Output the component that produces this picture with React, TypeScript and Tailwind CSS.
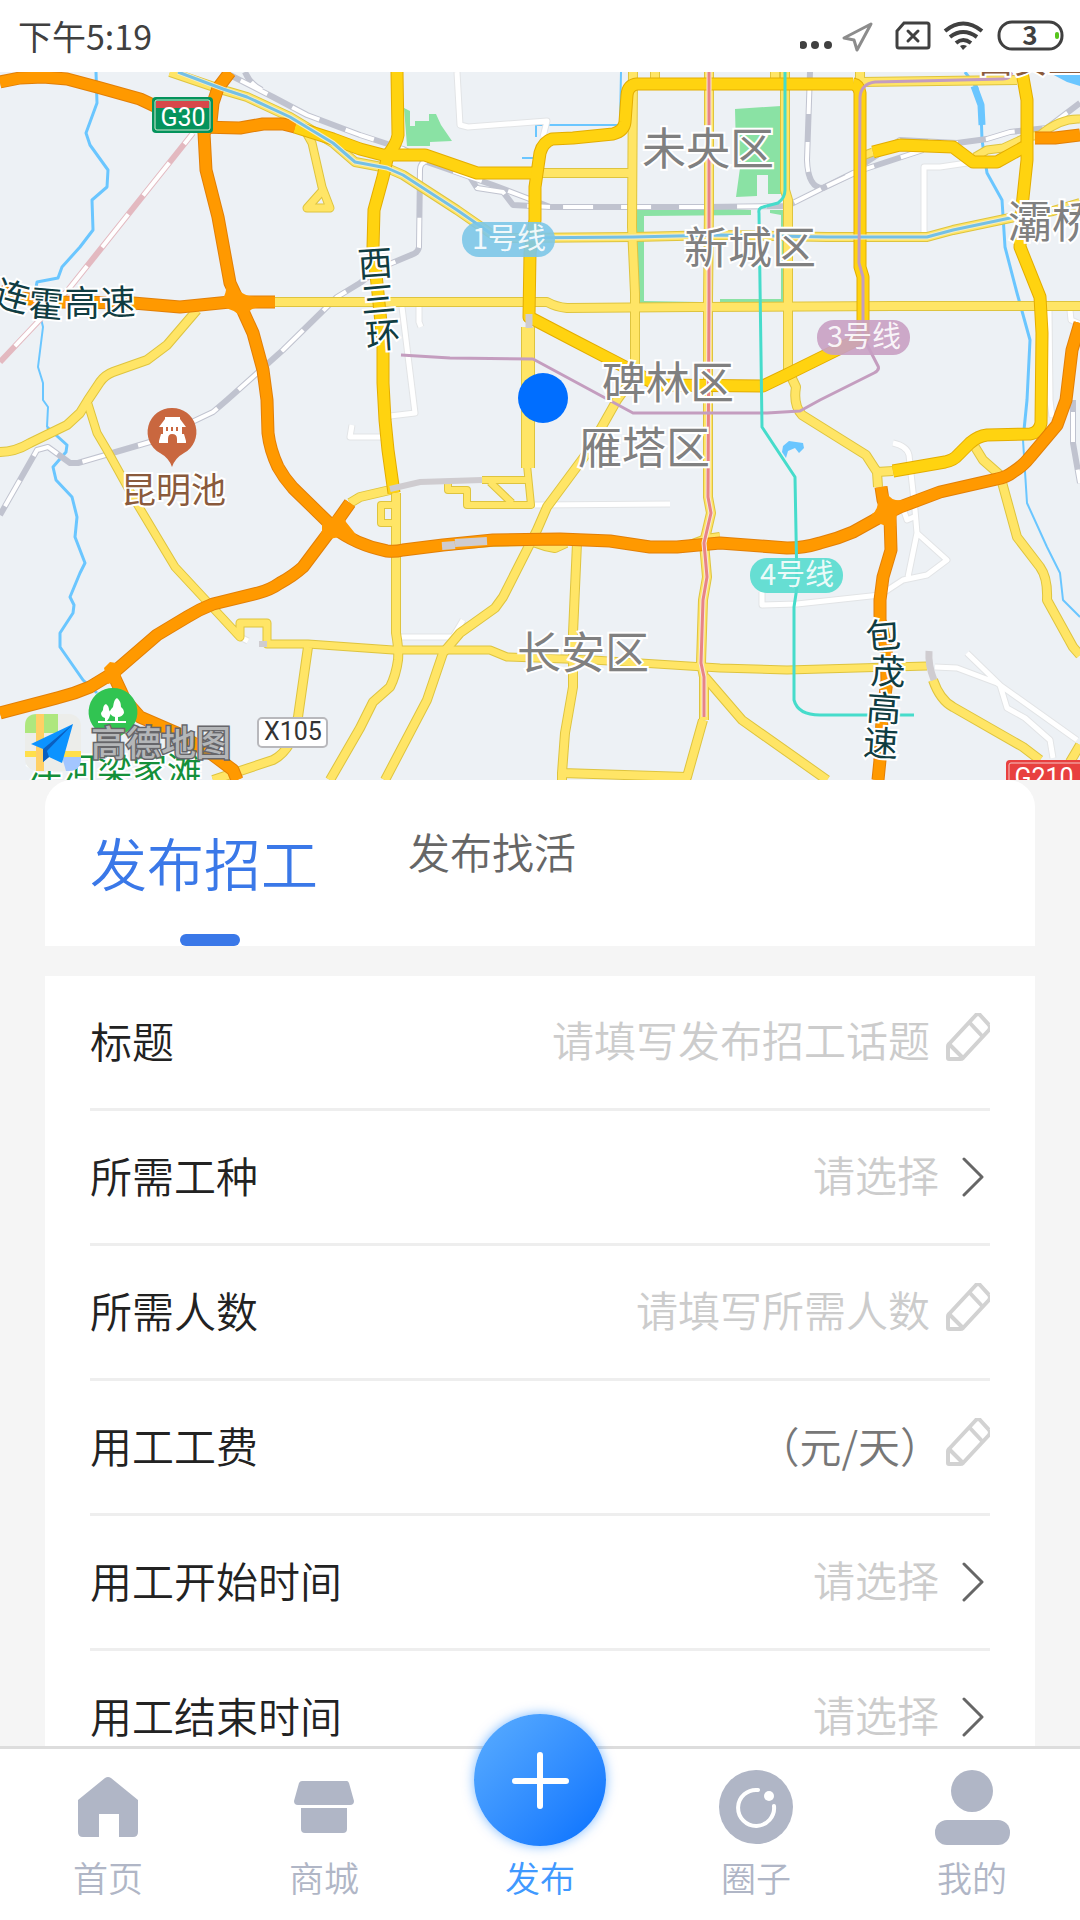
import type { ReactNode } from "react";

interface Road {
	d: string;
	w?: number;
}

const HIGHWAYS: Road[] = [
	{ d: "M0 82L20 78L43 77L67 79L97 87L140 99L157 107L200 127L240 128L263 124L283 124L295 127" },
	{ d: "M230 72L218 88L213 103L211 122L204 133L206 170L218 217L230 283L238 300L253 333L263 370L267 400L268 433Q270 450 278 467Q284 478 293 488L333 527Q356 545 387 551Q395 552 403 550L443 545L493 540L560 539L610 541L650 547L677 547L720 543L787 548Q804 548 820 543Q837 539 853 532L880 517L900 507L940 492L997 479Q1007 477 1013 472Q1023 466 1030 457L1057 425L1066 400L1072 350L1080 323" },
	{ d: "M0 291L20 298L60 302L133 303L180 307L230 302L275 302" },
	{ d: "M350 503L333 527L303 567Q293 576 280 583Q270 590 258 593L213 604Q200 609 187 617L157 635L113 673L90 687Q74 694 57 698L0 713" },
	{ d: "M112 672L125 700L140 717L177 733L213 755L233 770L237 780" },
	{ d: "M881 487L883 500L890 517L891 550L883 577L880 600L880 620L886 647L887 680L882 720L880 760L878 780" },
	{ d: "M1035 138L1055 138L1080 135" },
];

const ARTERIALS: Road[] = [
	{ d: "M397 72L398 135Q397 143 388 155L383 177L374 210L373 247L378 293L383 343L383 383L385 420L388 450L394 493" },
	{ d: "M295 127L333 139L360 149L383 155L425 155L477 173L537 173" },
	{ d: "M853 84L637 84Q628 85 627 95L625 122Q624 131 613 134L573 138L552 139Q543 142 540 153L535 187L535 220L530 253L529 317L573 340L627 368L657 385L763 386L790 373L863 337L863 277L860 267L860 93Q859 85 853 84" },
	{ d: "M873 152L900 145L953 147L973 162L997 162L1024 147" },
	{ d: "M1022 72L1027 100L1027 160L1022 207L1020 247L1040 297L1042 333L1041 423Q1039 433 1030 434L987 435Q978 436 970 443L958 455Q954 460 945 462L893 471" },
];

const STREETS: Road[] = [
	{ d: "M170 72L223 90L247 97L290 117L333 143L355 162L387 168L403 175L457 210L493 235L513 238L633 237L720 235L827 237L927 237L953 230L1010 218L1053 211L1080 203" },
	{ d: "M303 127L312 143L322 187L330 208L307 208L323 190", w: 7 },
	{ d: "M275 302L527 302L547 302Q556 307 567 308L693 307L893 306L1037 306L1080 306" },
	{ d: "M197 310L167 345L147 360L113 372Q105 375 100 382L88 400L80 413L67 425L30 443Q15 452 0 452" },
	{ d: "M88 404L97 433L107 450L133 497L175 567L240 637L240 623L267 623L267 644L308 644L393 650L490 650L507 657L593 660L720 668L787 670L927 666", w: 7 },
	{ d: "M308 647L298 717L290 743Q283 755 273 760L213 780" },
	{ d: "M396 493L396 550L396 633Q399 650 398 660Q396 675 390 687L373 702L360 728L330 780" },
	{ d: "M635 375L617 400L587 453L547 507L537 530L503 597L495 608L460 633L443 653L427 700L385 780" },
	{ d: "M577 543L573 633L573 687L565 733L562 773L687 777L703 720M562 773L562 780" },
	{ d: "M709 72L709 207L708 300L708 393L708 497L711 513L704 543L707 577L703 600L701 663L704 677L704 720" },
	{ d: "M633 72L632 227L635 293L635 367" },
	{ d: "M655 72L655 84" },
	{ d: "M775 72L775 84" },
	{ d: "M537 173L632 173" },
	{ d: "M785 72L785 190L788 200L788 370L796 387Q793 405 802 415L866 455L877 472L878 487M877 472L893 471" },
	{ d: "M860 72L860 82L1017 80" },
	{ d: "M865 155L873 152M975 157L987 150L1003 148L1027 137L1040 135Q1060 118 1080 119", w: 7 },
	{ d: "M528 327L528 468", w: 12 },
	{ d: "M527 465L531 505L467 505L467 490L448 490L448 483M482 480L527 480M490 482L512 503", w: 6 },
	{ d: "M350 503L360 497L390 490" },
	{ d: "M395 505L381 505L381 523L397 523", w: 6 },
	{ d: "M975 447L983 460L1000 475L1017 537L1040 567Q1048 578 1047 600L1073 647L1080 655" },
	{ d: "M933 680Q940 700 953 707L1023 747L1040 760M1070 762L1080 745" },
	{ d: "M705 677L742 720L827 780" },
	{ d: "M396 550L430 547L490 542L530 541L545 546L555 548L566 543M690 545L706 539L720 537" },
];

const LANES: Road[] = [
	{ d: "M457 72L460 125L468 127L547 121L543 137" },
	{ d: "M402 307L415 413L390 416M419 307L419 322L421 327" },
	{ d: "M352 425L350 437L382 437" },
	{ d: "M535 505L670 504M400 637L453 637L463 620" },
	{ d: "M924 233L924 167L940 167L967 163" },
	{ d: "M1049 310L1050 400L1052 417M1070 310L1071 320L1080 324" },
	{ d: "M893 443Q907 446 909 455L915 510L917 533L908 577M917 533L947 560L927 575L903 580L880 595L797 604L762 605L762 592" },
	{ d: "M935 667L957 668L997 683L1077 740M967 653L1000 685L1007 708L1025 718L1050 740L1053 758" },
	{ d: "M904 511L907 520L916 516" },
	{ d: "M240 637L248 641" },
];

const RAILS = [
	"M230 75L273 97L307 115L360 135L403 149L427 162L470 177L493 185L527 198L550 207L707 207L787 206L853 173L923 150",
	"M245 72Q250 84 262 90",
	"M470 177L477 188L503 192L513 205L550 207",
	"M865 163L900 140L957 143L987 139L1010 132L1047 128L1080 103",
	"M810 72L807 160Q808 188 823 188L857 172",
	"M437 163Q420 158 420 170L419 247Q418 253 411 255L380 268L360 283L337 297L283 350L227 400L213 412L150 442L78 463L70 463L48 447L37 450L0 515",
	"M1073 400L1073 443L1080 483",
];

const RIVERS: Road[] = [
	{ d: "M96 72L97 103L86 133L90 145L108 170L107 187L92 200L93 230L80 247L62 267L58 278L37 282L35 293" },
	{ d: "M35 293L43 327L38 367L43 383L43 400L48 407L47 427", w: 2 },
	{ d: "M47 427L67 445L66 452L53 467L56 480L72 497L77 517L75 537L85 563L80 573L70 597L74 605L73 613L60 633L60 647L83 680L97 693" },
	{ d: "M965 72L977 88L981 110L982 140L987 173L1002 200L1005 247L1017 293L1030 340L1027 400L1023 440" },
	{ d: "M1023 440L1027 503L1047 547L1060 573L1063 600L1080 617", w: 2 },
	{ d: "M621 72L620 125L537 125M536 125L536 137M522 158L533 158", w: 2 },
];

interface District {
	name: string;
	x: number;
	y: number;
}

const DISTRICTS: District[] = [
	{ name: "未央区", x: 708, y: 149 },
	{ name: "新城区", x: 750, y: 248 },
	{ name: "灞桥区", x: 1074, y: 222 },
	{ name: "碑林区", x: 668, y: 383 },
	{ name: "雁塔区", x: 644, y: 448 },
	{ name: "长安区", x: 583, y: 653 },
];

// [char, x, y, rotation]
const ROAD_NAMES: [string, number, number, number][] = [
	["连", 12, 296, 15],
	["霍", 46, 304, 5],
	["高", 82, 303, 0],
	["速", 118, 302, -2],
	["西", 375, 263, -4],
	["三", 378, 299, -5],
	["环", 383, 335, -4],
	["包", 883, 635, -5],
	["茂", 888, 671, 2],
	["高", 884, 708, 4],
	["速", 881, 743, 4],
];

const METRO_LINES = [
	{ name: "1号线", x: 462, y: 222, fill: "#7cc6e8" },
	{ name: "3号线", x: 817, y: 320, fill: "#c8a0c3" },
	{ name: "4号线", x: 750, y: 558, fill: "#57dccf" },
];

function RoadLayer({ roads, color, casing, width }: { roads: Road[]; color: string; casing: string; width: number }) {
	return (
		<g fill="none" strokeLinejoin="round">
			{roads.map((road) => (
				<path key={road.d} d={road.d} stroke={casing} strokeWidth={(road.w ?? width) + 2} />
			))}
			{roads.map((road) => (
				<path key={road.d} d={road.d} stroke={color} strokeWidth={road.w ?? width} />
			))}
		</g>
	);
}

function CityMap() {
	return (
		<svg
			viewBox="0 72 1080 708"
			className="block w-full shrink-0 bg-[#edf1f5] font-['Noto_Sans_CJK_SC',sans-serif]"
			role="img"
			aria-label="高德地图"
		>
			<g fill="#8ae2a4">
				<path d="M404 108L410 111V126H415V121H429V114H436L441 125L452 141L430 142V146H407Z" />
				<path d="M735 109L781 106V194H768V175H757V196L736 197L740 168L736 150Z" />
				<path d="M636 210L708 208L751 210V215L644 216V301L700 302V307H636ZM770 210H784V304L720 305V299H781V215L770 213Z" />
			</g>
			<path d="M783 446L789 441L803 443L804 448L799 453L795 448L788 451L786 458L782 452Z" fill="#6ac6ff" />
			<path d="M1048 72L1067 82L1080 86V72Z" fill="#6ac6ff" />
			<g fill="none" stroke="#6ac6ff" strokeLinejoin="round">
				{RIVERS.map((river) => (
					<path key={river.d} d={river.d} strokeWidth={river.w ?? 3} />
				))}
				<path d="M974 86L981 105L982 125" strokeWidth="7" />
			</g>

			<RoadLayer roads={LANES} color="#ffffff" casing="#e2e4e6" width={5} />

			<g fill="none" strokeLinejoin="round">
				<path d="M193 133L68 290L0 362" stroke="#e3b9c0" strokeWidth="6" />
				<path d="M193 133L68 290L0 362" stroke="#ffffff" strokeWidth="4" strokeDasharray="42 24" strokeDashoffset="28" />
				{RAILS.map((d) => (
					<path key={d} d={d} stroke="#c0c3cf" strokeWidth="6" />
				))}
				{RAILS.map((d) => (
					<path key={d} d={d} stroke="#ffffff" strokeWidth="4" strokeDasharray="30 28" strokeDashoffset="-12" />
				))}
			</g>

			<RoadLayer roads={STREETS} color="#ffe566" casing="#dec43f" width={8} />
			<RoadLayer roads={ARTERIALS} color="#ffd310" casing="#e3ad00" width={11} />
			<RoadLayer roads={HIGHWAYS} color="#ff9900" casing="#e27f06" width={11} />
			<g fill="#ff9900">
				<path d="M226 283Q228 300 212 305L226 308Q241 312 248 327L249 312Q252 306 275 306V297H255Q240 296 234 283Z" />
				<path d="M322 516L332 518L341 508L346 522L358 537L340 537L329 539L317 541L322 531Z" />
				<path d="M878 495L887 493Q891 502 905 500L904 510Q894 512 896 526H886L878 523L868 528L872 514Q879 510 878 495Z" />
				<path d="M104 668L110 662L122 664L120 680L108 684Z" />
			</g>
			<g fill="none" stroke="#cfccd0">
				<path d="M390 489L420 482L482 480" strokeWidth="6" />
				<path d="M442 546L455 545M455 543L487 541" strokeWidth="8" />
				<path d="M529 314V328" strokeWidth="7" />
				<path d="M929 651Q928 665 934 680" strokeWidth="7" />
				<path d="M259 644H267" strokeWidth="6" />
			</g>

			<g fill="none" strokeLinejoin="round">
				<path d="M178 72L223 89L247 97L290 117L333 143L355 162L387 168L403 175L457 210L493 235L513 238L633 237L720 235L827 237L927 237L953 230L1010 218L1080 206" stroke="#f2ecc8" strokeWidth="5" />
				<path d="M178 72L223 89L247 97L290 117L333 143L355 162L387 168L403 175L457 210L493 235L513 238L633 237L720 235L827 237L927 237L953 230L1010 218L1080 206" stroke="#74c0e6" strokeWidth="3" />
				<path d="M709 72L709 300L708 497L711 513L704 543L707 577L703 600L701 663L704 677L704 717" stroke="#f6e6dc" strokeWidth="5" />
				<path d="M709 72L709 300L708 497L711 513L704 543L707 577L703 600L701 663L704 677L704 717" stroke="#e88486" strokeWidth="3" />
				<path d="M401 355L450 358L533 359L633 413L767 413L800 411L820 400L874 373Q880 370 878 366L863 337L863 277L859 263L860 97Q861 84 875 82L1003 79Q1010 79 1012 72" stroke="#c49dbf" strokeWidth="3" />
				<path d="M785 72L785 190Q785 198 778 203L763 207Q758 208 759 213L762 427L795 477L797 587L794 607L794 700Q798 715 820 715L914 715" stroke="#46dccb" strokeWidth="3" />
			</g>

			{METRO_LINES.map(({ name, x, y, fill }) => (
				<g key={name}>
					<rect x={x} y={y} width="93" height="35" rx="17" fill={fill} fillOpacity="0.9" />
					<text x={x + 47} y={y + 27} textAnchor="middle" fontSize="29" fill="#ffffff" fillOpacity="0.9">
						{name}
					</text>
				</g>
			))}

			<g fontSize="44" fill="#808080" textAnchor="middle" stroke="#ffffff" strokeWidth="4" paintOrder="stroke">
				{DISTRICTS.map(({ name, x, y }) => (
					<text key={name} x={x} y={y + 16}>
						{name}
					</text>
				))}
			</g>
			<g fontSize="35" fill="#103d42" textAnchor="middle" stroke="#ffffff" strokeWidth="4" paintOrder="stroke">
				{ROAD_NAMES.map(([char, x, y, angle]) => (
					<text key={`${char}${x}`} x={x} y={y + 13} transform={`rotate(${angle} ${x} ${y})`}>
						{char}
					</text>
				))}
			</g>
			<g fontSize="35" stroke="#ffffff" strokeWidth="4" paintOrder="stroke">
				<text x="121" y="503" fill="#8a5a3c">
					昆明池
				</text>
				<text x="978" y="73" fill="#8a5a3c">
					西安工
				</text>
				<text x="27" y="783" fill="#14903a">
					沣河梁家滩
				</text>
			</g>

			<rect x="152" y="97" width="61" height="36" rx="4" fill="#04935c" />
			<rect x="155" y="100" width="55" height="30" rx="2" fill="none" stroke="#d6e8d2" />
			<path d="M156 101H209V108H156Z" fill="#d8474a" />
			<rect x="1006" y="760" width="90" height="36" rx="4" fill="#e8403f" />
			<rect x="1009" y="763" width="84" height="30" rx="2" fill="none" stroke="#f6c4c4" />
			<rect x="258" y="718" width="69" height="29" rx="4" fill="#ffffff" stroke="#b8b8bc" strokeWidth="2" />
			<g fontSize="25" textAnchor="middle" className="font-['Roboto',sans-serif]">
				<text x="183" y="126" fill="#ffffff">
					G30
				</text>
				<text x="1044" y="786" fill="#ffffff">
					G210
				</text>
				<text x="293" y="740" fill="#333333">
					X105
				</text>
			</g>

			{/* landmark pins */}
			<path d="M172 408A24 24 0 0 1 184 453Q175 458 172 467Q169 458 160 453A24 24 0 0 1 172 408Z" fill="#c9673f" />
			<path d="M165 419V417H180V419L186 427H182V434H184L186 441V443H177V439Q177 434 172 434Q168 434 168 439V443H159V441L161 434H163V427H159L165 419ZM166 427V431H168V427ZM171 427V431H173V427ZM176 427V431H178V427Z" fill="#ffffff" fillRule="evenodd" />
			<path d="M113 688A24 24 0 0 1 125 733Q116 738 113 747Q110 738 101 733A24 24 0 0 1 113 688Z" fill="#31c452" />
			<path d="M98 721H126V723H98ZM115 721V717Q110 716 110 711Q111 709 113 707Q114 699 117 698Q121 701 121 707Q124 709 124 713Q122 717 118 717V721ZM105 721V718Q101 717 101 713L103 710Q103 705 106 704Q109 706 109 710L111 713L109 718L107 721Z" fill="#ffffff" />

			{/* provider mark */}
			<g>
				<rect x="25" y="714" width="56" height="57" rx="12" fill="#ecedea" />
				<path d="M37 714H58V733H25V726Q25 714 37 714Z" fill="#aee77e" />
				<path d="M25 751H81V757H25Z" fill="#ffdf4b" />
				<path d="M62 757H81V760Q80 771 69 771H66Z" fill="#a3c6ff" />
				<path d="M36 714H44V771H36Z" fill="#ffd065" />
				<path d="M73 724L31 744L43 749L43 762L49 757L62 763Z" fill="#0c93ff" />
				<path d="M73 724L43 749L43 762L49 757L47 751Z" fill="#0a5fc0" />
			</g>
			<text x="91" y="756" fontSize="35" fontWeight="500" fill="#b4b6b8" stroke="#66666a" strokeWidth="3" paintOrder="stroke">
				高德地图
			</text>

			<circle cx="543" cy="398" r="25" fill="#006eff" />
		</svg>
	);
}

function StatusBar() {
	return (
		<header className="flex h-[72px] shrink-0 items-center justify-between bg-white pr-4 pl-[18px] text-[#404040]">
			<time className="text-[34px] leading-none">下午5:19</time>
			<svg width="264" height="32" viewBox="800 20 264 32" fill="none" aria-hidden="true">
				<g fill="#404040">
					<circle cx="803" cy="45" r="4" />
					<circle cx="815" cy="45" r="4" />
					<circle cx="828" cy="45" r="4" />
				</g>
				<path d="M871 24L844 38L854 40L857 50Z" stroke="#8c8c8c" strokeWidth="3" strokeLinejoin="round" />
				<path d="M904 23H927Q929 23 929 25V46Q929 48 927 48H899Q897 48 897 46V31Z" stroke="#404040" strokeWidth="3" />
				<path d="M908 31L918 41M918 31L908 41" stroke="#404040" strokeWidth="3" strokeLinecap="round" />
				<g stroke="#404040" strokeWidth="4">
					<path d="M945 31Q963 16 982 31" />
					<path d="M950 37Q963 27 977 37" />
					<path d="M956 43Q963 37 971 43" />
				</g>
				<path d="M960 46Q963 44 967 46L963 50Z" fill="#404040" />
				<rect x="999" y="22" width="63" height="27" rx="13" stroke="#404040" strokeWidth="3" />
				<rect x="1055" y="32" width="4" height="7" rx="2" fill="#56c41b" />
				<text x="1030" y="45" fontSize="26" fontWeight="700" textAnchor="middle" fill="#404040">
					3
				</text>
			</svg>
		</header>
	);
}

function PencilIcon() {
	return (
		<svg viewBox="0 0 44 48" className="mb-2.5 h-12 w-11 shrink-0" fill="none" stroke="#d2d2d2" strokeWidth="4" strokeLinejoin="round" aria-hidden="true">
			<path d="M3 31L30 2Q32 0 34 2L43 12Q45 14 43 17L17 45Q16 46 14 46H3Q2 46 2 45V33Q2 32 3 31Z" />
			<path d="M3 31L17 45M23 9L37 24" />
		</svg>
	);
}

function ChevronIcon() {
	return (
		<svg viewBox="0 0 22 40" className="mr-1.5 h-10 w-[22px] shrink-0" fill="none" stroke="#666666" strokeWidth="3" strokeLinecap="round" strokeLinejoin="round" aria-hidden="true">
			<path d="M2 2L20 20L2 38" />
		</svg>
	);
}

interface Field {
	id: string;
	label: string;
	hint: string;
	type: "input" | "unit" | "select";
}

const FIELDS: Field[] = [
	{ id: "title", label: "标题", hint: "请填写发布招工话题", type: "input" },
	{ id: "trade", label: "所需工种", hint: "请选择", type: "select" },
	{ id: "headcount", label: "所需人数", hint: "请填写所需人数", type: "input" },
	{ id: "wage", label: "用工工费", hint: "（元/天）", type: "unit" },
	{ id: "start", label: "用工开始时间", hint: "请选择", type: "select" },
	{ id: "end", label: "用工结束时间", hint: "请选择", type: "select" },
];

function FieldControl({ field }: { field: Field }) {
	if (field.type === "select") {
		return (
			<div className="flex items-center gap-[22px]">
				<select id={field.id} className="appearance-none bg-transparent pb-1.5 text-[#cccccc] outline-none">
					<option>{field.hint}</option>
				</select>
				<ChevronIcon />
			</div>
		);
	}
	return (
		<div className={field.type === "unit" ? "flex min-w-0 flex-1 items-center gap-1" : "flex min-w-0 flex-1 items-center gap-4"}>
			<input
				id={field.id}
				type="text"
				placeholder={field.hint}
				className={
					field.type === "unit"
						? "min-w-0 flex-1 pb-1 text-right outline-none placeholder:text-[#777777]"
						: "min-w-0 flex-1 pb-1.5 text-right outline-none placeholder:text-[#cccccc]"
				}
			/>
			<PencilIcon />
		</div>
	);
}

function PublishForm() {
	return (
		<form className="mx-[45px] mt-[30px] bg-white px-[45px] text-[42px] leading-[60px] font-[350] text-[#222222]">
			{FIELDS.map((field) => (
				<div key={field.id} className="flex h-[135px] items-center justify-between gap-8 border-b-3 border-[#eeeeee]">
					<label htmlFor={field.id} className="shrink-0 pb-1">
						{field.label}
					</label>
					<FieldControl field={field} />
				</div>
			))}
		</form>
	);
}

function PublishTabs() {
	return (
		<div role="tablist" className="mx-[45px] flex h-[166px] items-start gap-[78px] rounded-t-[27px] bg-white px-[45px] font-[350]">
			<button type="button" role="tab" aria-selected="true" className="flex h-full w-60 flex-col justify-between pt-[43px] text-left text-[57px] leading-[76px] text-[#3a78e8]">
				发布招工
				<span className="h-3 w-[60px] self-center rounded-full bg-[#3a78e8]" />
			</button>
			<button type="button" role="tab" aria-selected="false" className="pt-[43px] text-[42px] leading-[56px] text-[#666666]">
				发布找活
			</button>
		</div>
	);
}

function NavItem({ label, children }: { label: string; children: ReactNode }) {
	return (
		<a href="#" className="flex flex-1 flex-col items-center pt-[21px] text-[#b0b6c6]">
			<svg width="75" height="75" viewBox="0 0 75 75" fill="currentColor" aria-hidden="true">
				{children}
			</svg>
			<span className="mt-1.5 leading-[52px]">{label}</span>
		</a>
	);
}

function BottomNav() {
	return (
		<nav className="relative flex h-[174px] shrink-0 border-t-3 border-[#dddddd] bg-white text-[35px] font-[350]">
			<NavItem label="首页">
				<path d="M34 8Q37 6 40 8L67 30V62Q67 67 62 67H48V44H28V67H12Q7 67 7 62V30Z" />
			</NavItem>
			<NavItem label="商城">
				<path d="M15 11H60Q61 11 62 13L67 31Q67 35 63 35H11Q7 35 7 31L12 13Q13 11 15 11ZM14 38H60V59Q60 63 56 63H18Q14 63 14 59Z" />
			</NavItem>
			<a href="#" className="flex flex-1 flex-col items-center text-[#4099ff]">
				<span className="-mt-[35px] flex size-[132px] items-center justify-center rounded-full bg-linear-to-br from-[#5aadff] to-[#0070ff] shadow-[0_0_12px_rgba(0,122,255,0.5)]">
					<svg width="57" height="57" viewBox="0 0 57 57" stroke="#ffffff" strokeWidth="6" strokeLinecap="round" aria-hidden="true">
						<path d="M3 29H54M28 3V54" />
					</svg>
				</span>
				<span className="mt-[5px] leading-[52px]">发布</span>
			</a>
			<NavItem label="圈子">
				<circle cx="37" cy="37" r="37" />
				<path d="M39 20A18 18 0 1 0 55 36" fill="none" stroke="#ffffff" strokeWidth="4" strokeLinecap="round" />
				<circle cx="50" cy="26" r="5" fill="#ffffff" />
			</NavItem>
			<NavItem label="我的">
				<circle cx="37" cy="21" r="21" />
				<rect y="50" width="75" height="25" rx="12" />
			</NavItem>
		</nav>
	);
}

export default function App() {
	return (
		<div className="flex h-screen flex-col bg-[#f5f5f5] font-['Noto_Sans_CJK_SC',sans-serif]">
			<StatusBar />
			<main className="min-h-0 flex-1 overflow-y-auto [scrollbar-width:none]">
				<CityMap />
				<PublishTabs />
				<PublishForm />
			</main>
			<BottomNav />
		</div>
	);
}
